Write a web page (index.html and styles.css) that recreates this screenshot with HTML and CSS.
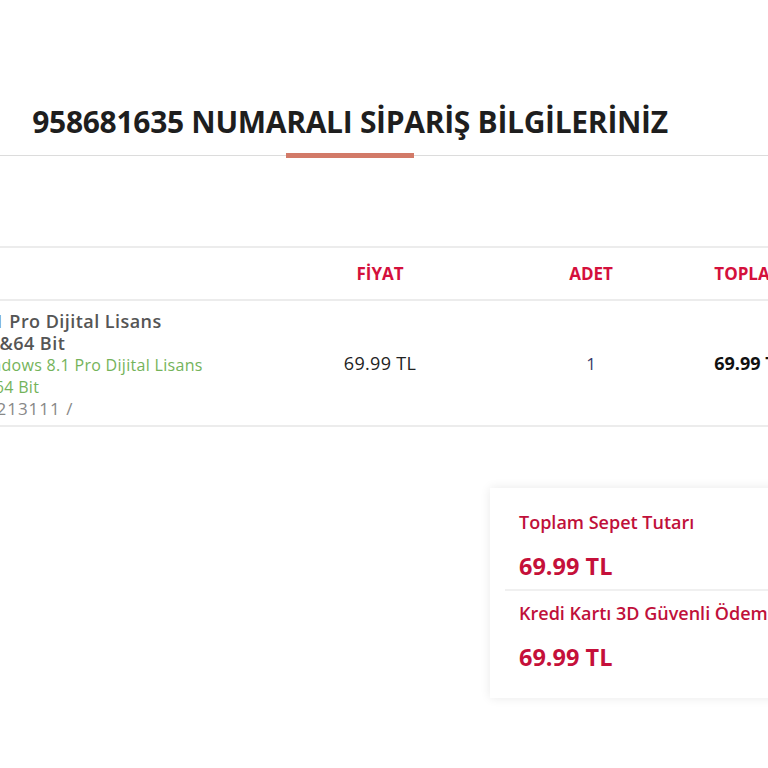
FILE: index.html
```html
<html>
    <head>
        <meta name="viewport" content="width=device-width, initial-scale=1.0">
        <title>Sipariş Bilgileri</title>
        <link rel="stylesheet" href="styles.css">
    </head>
    <body>
        <div class="page">
            <div class="heading">
                <h1>958681635 NUMARALI SİPARİŞ BİLGİLERİNİZ</h1>
                <div class="underline"></div>
            </div>

            <div class="cart">
                <div class="row head">
                    <div class="cell product"></div>
                    <div class="cell">FİYAT</div>
                    <div class="cell">ADET</div>
                    <div class="cell">TOPLAM</div>
                </div>
                <div class="row item">
                    <div class="cell product">
                        <div class="name">Windows 8.1 Pro Dijital Lisans 32&amp;64 Bit</div>
                        <div class="variant">Windows 8.1 Pro Dijital Lisans 32&amp;64 Bit</div>
                        <div class="code">10213111 /</div>
                    </div>
                    <div class="cell price">69.99 TL</div>
                    <div class="cell qty">1</div>
                    <div class="cell total">69.99 TL</div>
                </div>
            </div>

            <div class="summary-wrap">
                <div class="summary">
                    <div class="sum-block">
                        <div class="sum-label">Toplam Sepet Tutarı</div>
                        <div class="sum-value">69.99 TL</div>
                    </div>
                    <div class="sum-block last">
                        <div class="sum-label">Kredi Kartı 3D Güvenli Ödeme</div>
                        <div class="sum-value">69.99 TL</div>
                    </div>
                </div>
            </div>
        </div>
    </body>
</html>
```

FILE: styles.css
```css
html, body{
    margin: 0px;
    padding: 0px;
    background: white;
    font-family: 'Open Sans', 'Liberation Sans', sans-serif;
    overflow: hidden;
}
.page{
    width: 1000px;
    margin-left: -150px;
}
.heading{
    padding-top: 100px;
    border-bottom: 1px solid #dcdcdc;
    text-align: center;
}
.heading h1{
    margin: 0;
    font-size: 30px;
    font-weight: 700;
    color: #1e1e1e;
    line-height: 44px;
    letter-spacing: -0.3px;
}
.underline{
    width: 128px;
    height: 5px;
    margin: 6px auto 0;
    background-color: #d27a68;
    position: relative;
    top: 3px;
}
.cart{
    margin-top: 90px;
}
.row{
    display: grid;
    grid-template-columns: 312px 180px 242px 76px 1fr;
    padding-left: 128px;
    border-top: 2px solid #ececec;
    align-items: center;
}
.row:last-child{
    border-bottom: 2px solid #ececec;
}
.row.head{
    height: 51px;
}
.row.head .cell{
    text-align: center;
    color: #d4103c;
    font-weight: 700;
    font-size: 17px;
}
.row.item{
    height: 124px;
}
.cell{
    text-align: center;
    white-space: nowrap;
}
.row .cell.product{
    text-align: left;
    white-space: normal;
    padding-top: 3px;
}
.name{
    width: 210px;
    font-size: 18px;
    font-weight: 600;
    letter-spacing: 0.45px;
    color: #555;
    line-height: 22px;
    text-indent: -88px;
}
.variant{
    width: 250px;
    font-size: 16px;
    letter-spacing: 0.3px;
    color: #74b35a;
    line-height: 22px;
    text-indent: 8px;
    margin-left: -14px;
}
.code{
    font-size: 17px;
    letter-spacing: 1px;
    color: #888;
    line-height: 22px;
    margin-left: -3px;
}
.price{
    font-size: 18px;
    letter-spacing: 0.3px;
    color: #222;
}
.qty{
    font-size: 17px;
    color: #3a3a6a;
}
.total{
    font-size: 18px;
    font-weight: 700;
    color: #111;
}
.summary-wrap{
    padding-left: 640px;
    margin-top: 61px;
}
.summary{
    width: 330px;
    background: white;
    box-shadow: 0 0 10px rgba(0,0,0,0.09);
    padding: 10px 0 18px 15px;
}
.sum-block{
    border-bottom: 2px solid #f0f0f0;
    padding: 12px 0 6px 14px;
}
.sum-block.last{
    border-bottom: none;
    padding-top: 10px;
}
.sum-label{
    font-size: 18px;
    font-weight: 600;
    color: #c0103a;
    line-height: 24px;
}
.sum-value{
    margin-top: 15px;
    font-size: 23.5px;
    font-weight: 700;
    color: #c5103a;
    line-height: 34px;
}
```
